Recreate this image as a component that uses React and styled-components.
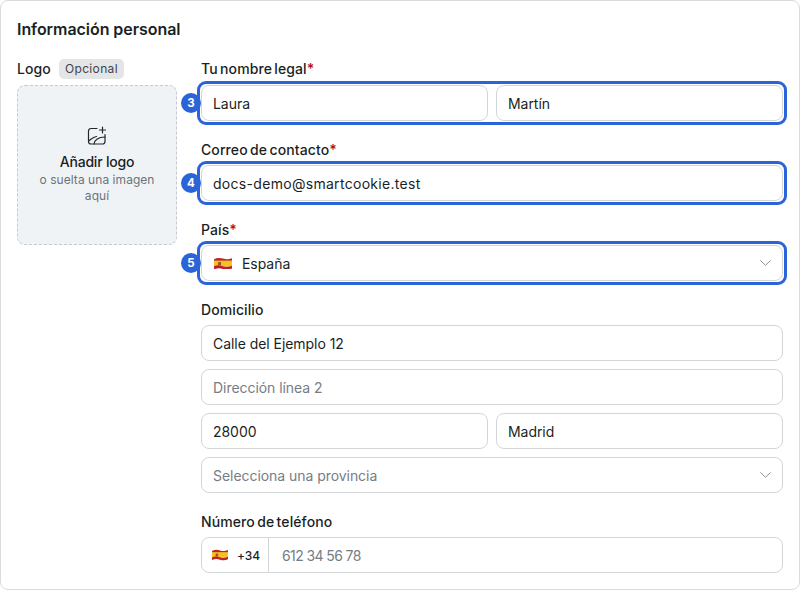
import React from "react";
import styled, { createGlobalStyle } from "styled-components";

const Global = createGlobalStyle`
  html, body { margin: 0; padding: 0; background: #fff; }
  body { font-family: "Inter", "Liberation Sans", sans-serif; color: #1b1f24; }
  * { box-sizing: border-box; }
`;

const Card = styled.section`
  width: 800px;
  height: 590px;
  border: 1px solid #d9dbdd;
  border-radius: 8px;
  padding: 18px 16px 0;
  background: #fff;
  overflow: hidden;
`;

const Title = styled.h2`
  margin: 0 0 20px;
  font-size: 16px;
  line-height: 20px;
  font-weight: 600;
  letter-spacing: -0.05px;
`;

const Columns = styled.div`
  display: grid;
  grid-template-columns: 160px 582px;
  column-gap: 24px;
`;

const LabelRow = styled.div`
  display: flex;
  align-items: center;
  gap: 8px;
  height: 20px;
  margin-bottom: 6px;
`;

const Label = styled.label`
  display: block;
  font-size: 14px;
  line-height: 20px;
  font-weight: 450;
  letter-spacing: 0.1px;
  word-spacing: -1.5px;
`;

const Required = styled.span`
  color: #b3131b;
  font-weight: 600;
`;

const Badge = styled.span`
  height: 20px;
  padding: 0 6px;
  border-radius: 5px;
  background: #e3e5e7;
  color: #3f454c;
  font-size: 12px;
  line-height: 20px;
  letter-spacing: 0.35px;
`;

const Drop = styled.div`
  height: 160px;
  border: 1px dashed #c6cacf;
  border-radius: 8px;
  background: #f0f3f6;
  display: flex;
  flex-direction: column;
  align-items: center;
  justify-content: center;
  text-align: center;
  padding: 0 16px;
`;

const DropTitle = styled.div`
  margin-top: 6px;
  font-size: 14px;
  line-height: 20px;
  font-weight: 550;
  letter-spacing: -0.2px;
`;

const DropHint = styled.div`
  font-size: 12px;
  line-height: 16px;
  color: #6d737a;
  letter-spacing: 0.05px;
`;

const Form = styled.div`
  display: flex;
  flex-direction: column;
`;

const Field = styled.div`
  display: flex;
  flex-direction: column;
  gap: 8px;
  margin-bottom: ${(p) => p.$mb || 0}px;
`;

const FieldLabel = styled(Label)`
  margin-bottom: ${(p) => (p.$first ? -2 : -3)}px;
`;

const Row = styled.div`
  position: relative;
  display: flex;
  gap: 8px;
`;

const Highlight = styled.div`
  position: absolute;
  inset: -4px;
  border: 3px solid #2b63d9;
  border-radius: 9px;
  pointer-events: none;
`;

const Step = styled.span`
  position: absolute;
  left: -20px;
  top: 8px;
  width: 20px;
  height: 20px;
  border-radius: 50%;
  background: #2b63d9;
  color: #fff;
  font-size: 11.5px;
  font-weight: 700;
  line-height: 20px;
  text-align: center;
`;

const Box = styled.div`
  flex: 1;
  height: 36px;
  display: flex;
  align-items: center;
  padding: 0 11px;
  border: 1px solid #d3d6d9;
  border-radius: 8px;
  background: #fff;
  font-size: 14px;
  letter-spacing: ${(p) => (p.$wide ? "0.3px" : "-0.05px")};
  color: ${(p) => (p.$muted ? "#777d84" : "#1b1f24")};
`;

const Grow = styled.span`
  flex: 1;
`;

const FlagWrap = styled.span`
  display: inline-flex;
  margin-left: ${(p) => p.$left || 0}px;
  margin-right: ${(p) => p.$gap}px;
`;

const Phone = styled.div`
  display: flex;
  height: 36px;
  border: 1px solid #d3d6d9;
  border-radius: 8px;
  background: #fff;
  overflow: hidden;
`;

const Prefix = styled.div`
  width: 67px;
  display: flex;
  align-items: center;
  padding-left: 10px;
  border-right: 1px solid #d3d6d9;
  font-size: 12px;
  font-weight: 450;
  letter-spacing: -0.1px;
`;

const PhoneValue = styled.div`
  flex: 1;
  display: flex;
  align-items: center;
  padding-left: 13px;
  font-size: 14px;
  letter-spacing: -0.6px;
  color: #777d84;
`;

const Flag = ({ w = 18 }) => (
  <svg width={w} height={w * 0.72} viewBox="0 0 18 13">
    <path d="M0 2.200C3 .6 6 .6 9 1.600s6 1 9-.4v3H0z" fill="#c0202a" />
    <path d="M0 3.600h18v6H0z" fill="#f4c320" />
    <path d="M0 9.200c3-1.200 6-1 9 0s6 1 9-.4v2.800c-3 1.400-6 1.400-9 .4s-6-1-9 .4z" fill="#c0202a" />
    <rect x="4" y="5" width="3" height="3.400" rx=".6" fill="#a6512a" />
  </svg>
);

const Chevron = () => (
  <svg width="11" height="6" viewBox="0 0 11 6" fill="none" stroke="#8d9298" strokeWidth="1" strokeLinecap="round" strokeLinejoin="round">
    <path d="M.7.7l4.800 4.600L10.300.7" />
  </svg>
);

const LogoIcon = () => (
  <svg width="20" height="20" viewBox="0 0 20 20" fill="none" stroke="#23272c" strokeWidth="1.200" strokeLinecap="round" strokeLinejoin="round">
    <path d="M10 2.500H4a2.500 2.500 0 0 0-2.500 2.500v10.500A2.500 2.500 0 0 0 4 18h11.500a2.500 2.500 0 0 0 2.500-2.500V8.500" />
    <path d="M15.500 1v6M12.500 4h6" />
    <path d="M1.500 15c2-1 4-4 8-4.500" />
    <path d="M7 18c0-3.500 4-7 11-7" />
  </svg>
);

const Marked = ({ step, children }) => (
  <Row>
    {children}
    <Highlight />
    <Step>{step}</Step>
  </Row>
);

export default function App() {
  return (
    <Card>
      <Global />
      <Title>Información personal</Title>
      <Columns>
        <div>
          <LabelRow>
            <Label>Logo</Label>
            <Badge>Opcional</Badge>
          </LabelRow>
          <Drop>
            <LogoIcon />
            <DropTitle>Añadir logo</DropTitle>
            <DropHint>o suelta una imagen aquí</DropHint>
          </Drop>
        </div>
        <Form>
          <Field $mb={19}>
            <FieldLabel $first>Tu nombre legal<Required>*</Required></FieldLabel>
            <Marked step="3">
              <Box>Laura</Box>
              <Box>Martín</Box>
            </Marked>
          </Field>
          <Field $mb={19}>
            <FieldLabel>Correo de contacto<Required>*</Required></FieldLabel>
            <Marked step="4">
              <Box $wide>docs-demo@smartcookie.test</Box>
            </Marked>
          </Field>
          <Field $mb={19}>
            <FieldLabel>País<Required>*</Required></FieldLabel>
            <Marked step="5">
              <Box>
                <FlagWrap $left={1} $gap={10}><Flag /></FlagWrap>
                <Grow>España</Grow>
                <Chevron />
              </Box>
            </Marked>
          </Field>
          <Field $mb={19}>
            <FieldLabel>Domicilio</FieldLabel>
            <Row><Box>Calle del Ejemplo 12</Box></Row>
            <Row><Box $muted>Dirección línea 2</Box></Row>
            <Row>
              <Box>28000</Box>
              <Box>Madrid</Box>
            </Row>
            <Row>
              <Box $muted>
                <Grow>Selecciona una provincia</Grow>
                <Chevron />
              </Box>
            </Row>
          </Field>
          <Field>
            <FieldLabel>Número de teléfono</FieldLabel>
            <Phone>
              <Prefix>
                <FlagWrap $gap={9}><Flag w={16} /></FlagWrap>
                +34
              </Prefix>
              <PhoneValue>612 34 56 78</PhoneValue>
            </Phone>
          </Field>
        </Form>
      </Columns>
    </Card>
  );
}
